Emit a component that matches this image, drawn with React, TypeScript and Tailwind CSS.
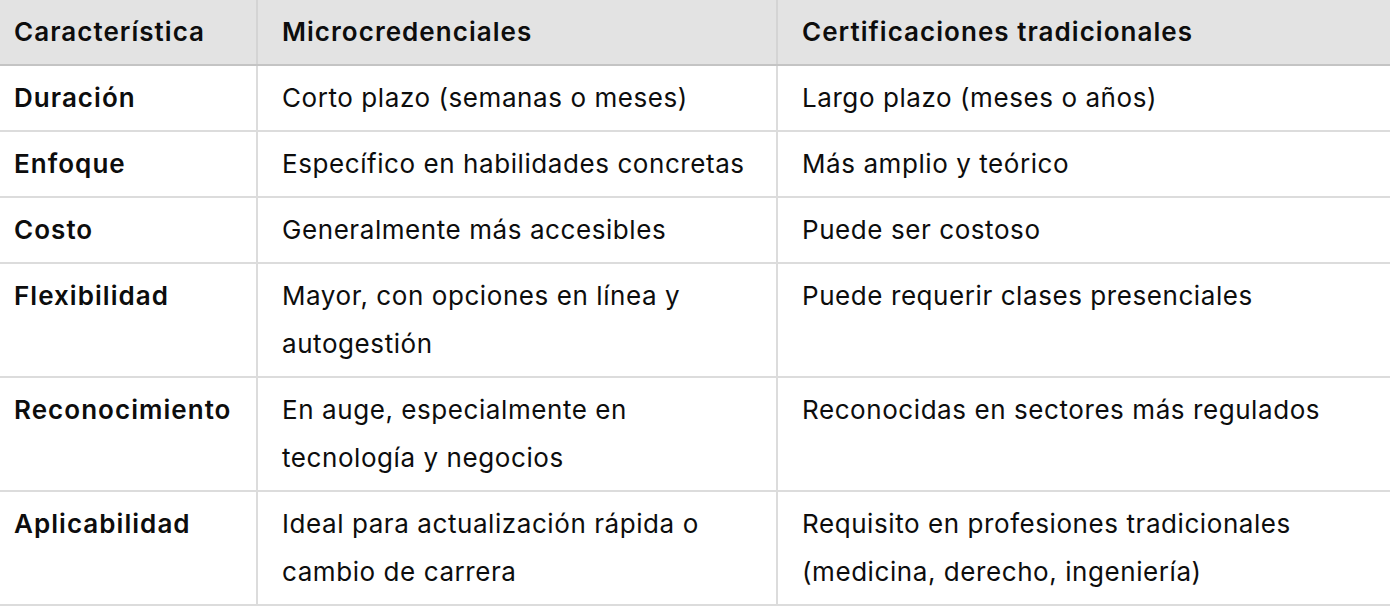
const rows: { k: string; a: string[]; b: string[] }[] = [
  { k: "Duración", a: ["Corto plazo (semanas o meses)"], b: ["Largo plazo (meses o años)"] },
  { k: "Enfoque", a: ["Específico en habilidades concretas"], b: ["Más amplio y teórico"] },
  { k: "Costo", a: ["Generalmente más accesibles"], b: ["Puede ser costoso"] },
  { k: "Flexibilidad", a: ["Mayor, con opciones en línea y", "autogestión"], b: ["Puede requerir clases presenciales"] },
  {
    k: "Reconocimiento",
    a: ["En auge, especialmente en", "tecnología y negocios"],
    b: ["Reconocidas en sectores más regulados"],
  },
  {
    k: "Aplicabilidad",
    a: ["Ideal para actualización rápida o", "cambio de carrera"],
    b: ["Requisito en profesiones tradicionales", "(medicina, derecho, ingeniería)"],
  },
];

export default function App() {
  return (
    <div
      className="w-[1390px] h-[610px] bg-white text-[#0d0d0d] text-[26px] leading-[48px] tracking-[0.022em]"
      style={{ fontFamily: "Inter, 'Noto Sans', sans-serif" }}
    >
      <div className="grid grid-cols-[256px_520px_1fr] bg-[#e3e3e3] border-b-2 border-[#c4c4c4] font-semibold tracking-[0.04em]">
        <div className="pl-[14px] py-2">Característica</div>
        <div className="border-l-2 border-[#d4d4d4] pl-6 py-2">Microcredenciales</div>
        <div className="border-l-2 border-[#d4d4d4] pl-6 py-2">Certificaciones tradicionales</div>
      </div>
      {rows.map((r) => (
        <div key={r.k} className="grid grid-cols-[256px_520px_1fr] border-b-2 border-[#dcdcdc]">
          <div className="pl-[14px] py-2 font-semibold tracking-[0.04em]">{r.k}</div>
          <div className="border-l-2 border-[#dcdcdc] pl-6 py-2">
            {r.a.map((l) => (
              <div key={l}>{l}</div>
            ))}
          </div>
          <div className="border-l-2 border-[#dcdcdc] pl-6 py-2">
            {r.b.map((l) => (
              <div key={l}>{l}</div>
            ))}
          </div>
        </div>
      ))}
    </div>
  );
}
